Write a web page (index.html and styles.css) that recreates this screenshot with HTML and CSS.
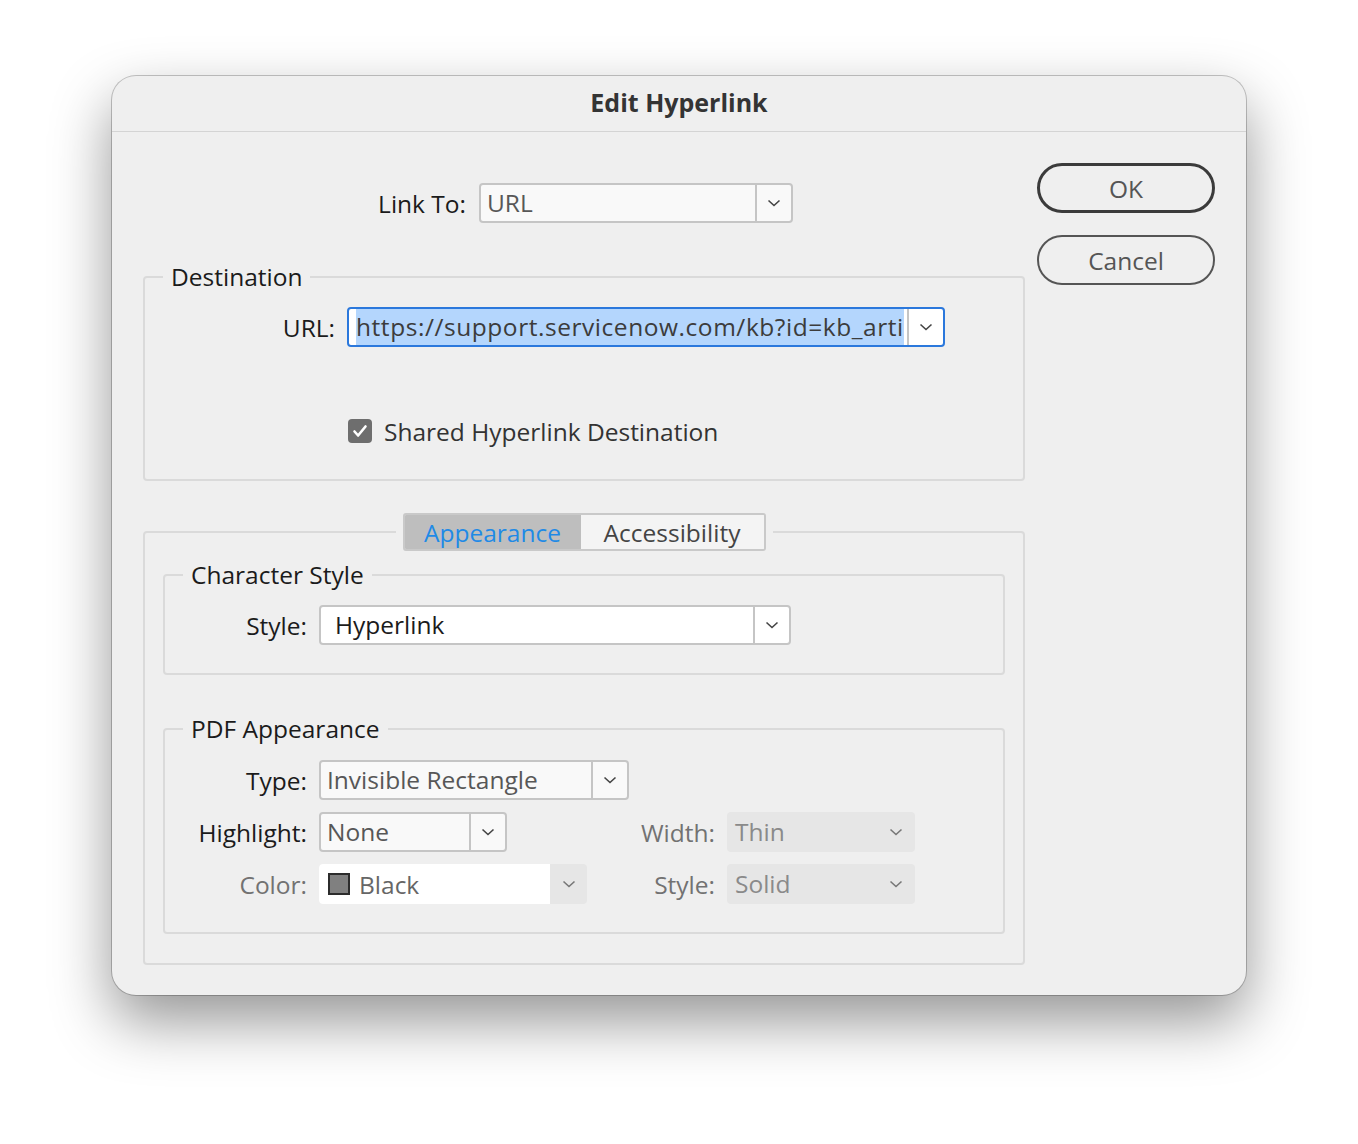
FILE: index.html
```html
<!DOCTYPE html>
<html lang="en">
<head>
  <meta charset="UTF-8">
  <title>Edit Hyperlink</title>
  <link rel="stylesheet" href="styles.css">
</head>
<body>

<div class="page">
  <div class="dialog">
    <div class="titlebar">Edit Hyperlink</div>

    <div class="content">
      <div class="main">

        <div class="row link-row">
          <span class="label link-label">Link To:</span>
          <div class="select link-select">
            <span class="value">URL</span>
            <span class="arrow"><svg width="14" height="8" viewBox="0 0 14 8"><path d="M1.5 1.5l5.5 5 5.5-5" fill="none" stroke="#444" stroke-width="1.6"/></svg></span>
          </div>
        </div>

        <fieldset class="group dest">
          <legend>Destination</legend>
          <div class="row url-row">
            <span class="label url-label">URL:</span>
            <div class="select url-select">
              <span class="value"><span class="selected">https://support.servicenow.com/kb?id=kb_arti</span></span>
              <span class="arrow"><svg width="14" height="8" viewBox="0 0 14 8"><path d="M1.5 1.5l5.5 5 5.5-5" fill="none" stroke="#444" stroke-width="1.6"/></svg></span>
            </div>
          </div>
          <div class="check-row">
            <svg class="checkbox" width="24" height="24" viewBox="0 0 24 24"><rect width="24" height="24" rx="4" fill="#6e6e6e"/><path d="M6.5 12.5l3.6 4 7.4-9" fill="none" stroke="#fff" stroke-width="2.6" stroke-linecap="round" stroke-linejoin="round"/></svg>
            <span class="check-text">Shared Hyperlink Destination</span>
          </div>
        </fieldset>

        <fieldset class="group tabbed">
          <legend class="tab-legend">
            <div class="tabs">
              <span class="tab active">Appearance</span>
              <span class="tab">Accessibility</span>
            </div>
          </legend>

          <fieldset class="group sub char-style">
            <legend>Character Style</legend>
            <div class="row">
              <span class="label field-label">Style:</span>
              <div class="select style-select">
                <span class="value">Hyperlink</span>
                <span class="arrow"><svg width="14" height="8" viewBox="0 0 14 8"><path d="M1.5 1.5l5.5 5 5.5-5" fill="none" stroke="#444" stroke-width="1.6"/></svg></span>
              </div>
            </div>
          </fieldset>

          <fieldset class="group sub pdf">
            <legend>PDF Appearance</legend>
            <div class="pdf-grid">
              <span class="label">Type:</span>
              <div class="select type-select">
                <span class="value">Invisible Rectangle</span>
                <span class="arrow"><svg width="14" height="8" viewBox="0 0 14 8"><path d="M1.5 1.5l5.5 5 5.5-5" fill="none" stroke="#444" stroke-width="1.6"/></svg></span>
              </div>
              <span></span>
              <span></span>

              <span class="label">Highlight:</span>
              <div class="select highlight-select">
                <span class="value">None</span>
                <span class="arrow"><svg width="14" height="8" viewBox="0 0 14 8"><path d="M1.5 1.5l5.5 5 5.5-5" fill="none" stroke="#444" stroke-width="1.6"/></svg></span>
              </div>
              <span class="label dim">Width:</span>
              <div class="select disabled">
                <span class="value">Thin</span>
                <span class="arrow"><svg width="14" height="8" viewBox="0 0 14 8"><path d="M1.5 1.5l5.5 5 5.5-5" fill="none" stroke="#777" stroke-width="1.6"/></svg></span>
              </div>

              <span class="label dim">Color:</span>
              <div class="color-select">
                <span class="color-value"><span class="swatch"></span>Black</span>
                <span class="arrow"><svg width="14" height="8" viewBox="0 0 14 8"><path d="M1.5 1.5l5.5 5 5.5-5" fill="none" stroke="#777" stroke-width="1.6"/></svg></span>
              </div>
              <span class="label dim">Style:</span>
              <div class="select disabled">
                <span class="value">Solid</span>
                <span class="arrow"><svg width="14" height="8" viewBox="0 0 14 8"><path d="M1.5 1.5l5.5 5 5.5-5" fill="none" stroke="#777" stroke-width="1.6"/></svg></span>
              </div>
            </div>
          </fieldset>
        </fieldset>

      </div>

      <div class="buttons">
        <button class="btn default">OK</button>
        <button class="btn">Cancel</button>
      </div>
    </div>
  </div>
</div>

</body>
</html>
```

FILE: styles.css
```css
body {
  margin: 0;
  background-color: #fff;
  font-family: 'Open Sans', 'Noto Sans', sans-serif;
  font-size: 24.5px;
  color: #1b1b1b;
}

.page {
  min-height: 1144px;
  box-sizing: border-box;
  padding-top: 76px;
}

.dialog {
  width: 1134px;
  height: 919px;
  box-sizing: border-box;
  margin: 0 auto;
  background-color: #efefef;
  border-radius: 24px;
  overflow: hidden;
  box-shadow: 0 0 0 1px rgba(0, 0, 0, 0.22), 0 26px 60px rgba(0, 0, 0, 0.42);
}

.titlebar {
  height: 56px;
  padding-bottom: 3px;
  box-sizing: border-box;
  border-bottom: 1px solid #d4d4d4;
  display: flex;
  align-items: center;
  justify-content: center;
  font-size: 25px;
  font-weight: 700;
  color: #343434;
}

.content {
  display: flex;
  gap: 12px;
  padding: 31px 31px 0 31px;
}

.main {
  width: 882px;
}

.buttons {
  width: 178px;
  display: flex;
  flex-direction: column;
  gap: 22px;
}

.btn {
  height: 50px;
  box-sizing: border-box;
  border: 2px solid #555;
  border-radius: 25px;
  background: transparent;
  font-family: inherit;
  font-size: 24.5px;
  color: #555;
  padding: 0;
}

.btn.default {
  border: 3px solid #3b3b3b;
}

.row {
  display: flex;
  align-items: center;
  gap: 12px;
  height: 40px;
}

.label {
  text-align: right;
  white-space: nowrap;
}

.label.dim {
  color: #727272;
}

.link-row {
  margin-top: 20px;
  gap: 13px;
}

.link-label {
  width: 323px;
}

.url-label {
  width: 190px;
}

.field-label {
  width: 142px;
}

/* group boxes */
.group {
  margin: 0;
  border: 2px solid #dadada;
  border-radius: 4px;
  min-width: 0;
}

.group legend {
  margin-left: 18px;
  padding: 0 8px;
  line-height: 30px;
}

.dest {
  margin-top: 39px;
  padding: 15px 0 33px;
}

.check-row {
  margin-top: 69px;
  height: 30px;
  padding-left: 203px;
  display: flex;
  align-items: center;
  gap: 12px;
  color: #333;
}

.tabbed {
  margin-top: 32px;
  padding: 9px 18px 29px;
}

.group .tab-legend {
  margin: 0 auto;
  padding: 0 7px;
  line-height: normal;
}

.tabs {
  display: flex;
  height: 38px;
  box-sizing: border-box;
  border: 2px solid #c9c9c9;
  border-radius: 3px;
  overflow: hidden;
}

.tab {
  width: 183px;
  display: flex;
  align-items: center;
  justify-content: center;
  background-color: #f4f4f4;
  color: #444;
}

.tab.active {
  width: 176px;
  background-color: #bebebe;
  color: #1f8ae6;
}

.sub {
  padding: 15px 0 28px;
}

.pdf {
  margin-top: 39px;
  padding: 16px 0 28px;
}

.pdf-grid {
  display: grid;
  grid-template-columns: 142px 310px 74px 188px;
  column-gap: 12px;
  row-gap: 12px;
  align-items: center;
}

/* dropdowns */
.select {
  display: flex;
  height: 40px;
  box-sizing: border-box;
  border: 2px solid #c5c5c5;
  border-radius: 4px;
  background-color: #f9f9f9;
}

.select .value {
  flex: 1;
  min-width: 0;
  padding-left: 6px;
  line-height: 36px;
  color: #575757;
  white-space: nowrap;
  overflow: hidden;
}

.select .arrow {
  width: 34px;
  border-left: 2px solid #c5c5c5;
  display: flex;
  align-items: center;
  justify-content: center;
}

.link-select {
  width: 314px;
}

.url-select {
  width: 598px;
  border-color: #2b78dc;
  background-color: #fff;
}

.url-select .value {
  padding-left: 7px;
  color: #3c3c3c;
  letter-spacing: 0.55px;
}

.selected {
  background-color: #b4d6fd;
  padding: 3px 0;
}

.style-select {
  width: 472px;
  background-color: #fff;
}

.style-select .value {
  padding-left: 14px;
  color: #1b1b1b;
}

.type-select {
  width: 310px;
}

.highlight-select {
  width: 188px;
}

.select.disabled {
  border: none;
  background-color: #e6e6e6;
}

.select.disabled .value {
  padding-left: 8px;
  line-height: 40px;
  color: #8a8a8a;
}

.select.disabled .arrow {
  width: 38px;
  border-left: none;
}

.color-select {
  display: flex;
  width: 268px;
  height: 40px;
  border-radius: 4px;
  background-color: #e6e6e6;
  overflow: hidden;
}

.color-value {
  width: 231px;
  background-color: #fff;
  display: flex;
  align-items: center;
  gap: 9px;
  padding-left: 9px;
  box-sizing: border-box;
  color: #666;
}

.swatch {
  width: 22px;
  height: 22px;
  box-sizing: border-box;
  border: 2px solid #2c2c2c;
  background-color: #808080;
}

.color-select .arrow {
  flex: 1;
  display: flex;
  align-items: center;
  justify-content: center;
}
```
